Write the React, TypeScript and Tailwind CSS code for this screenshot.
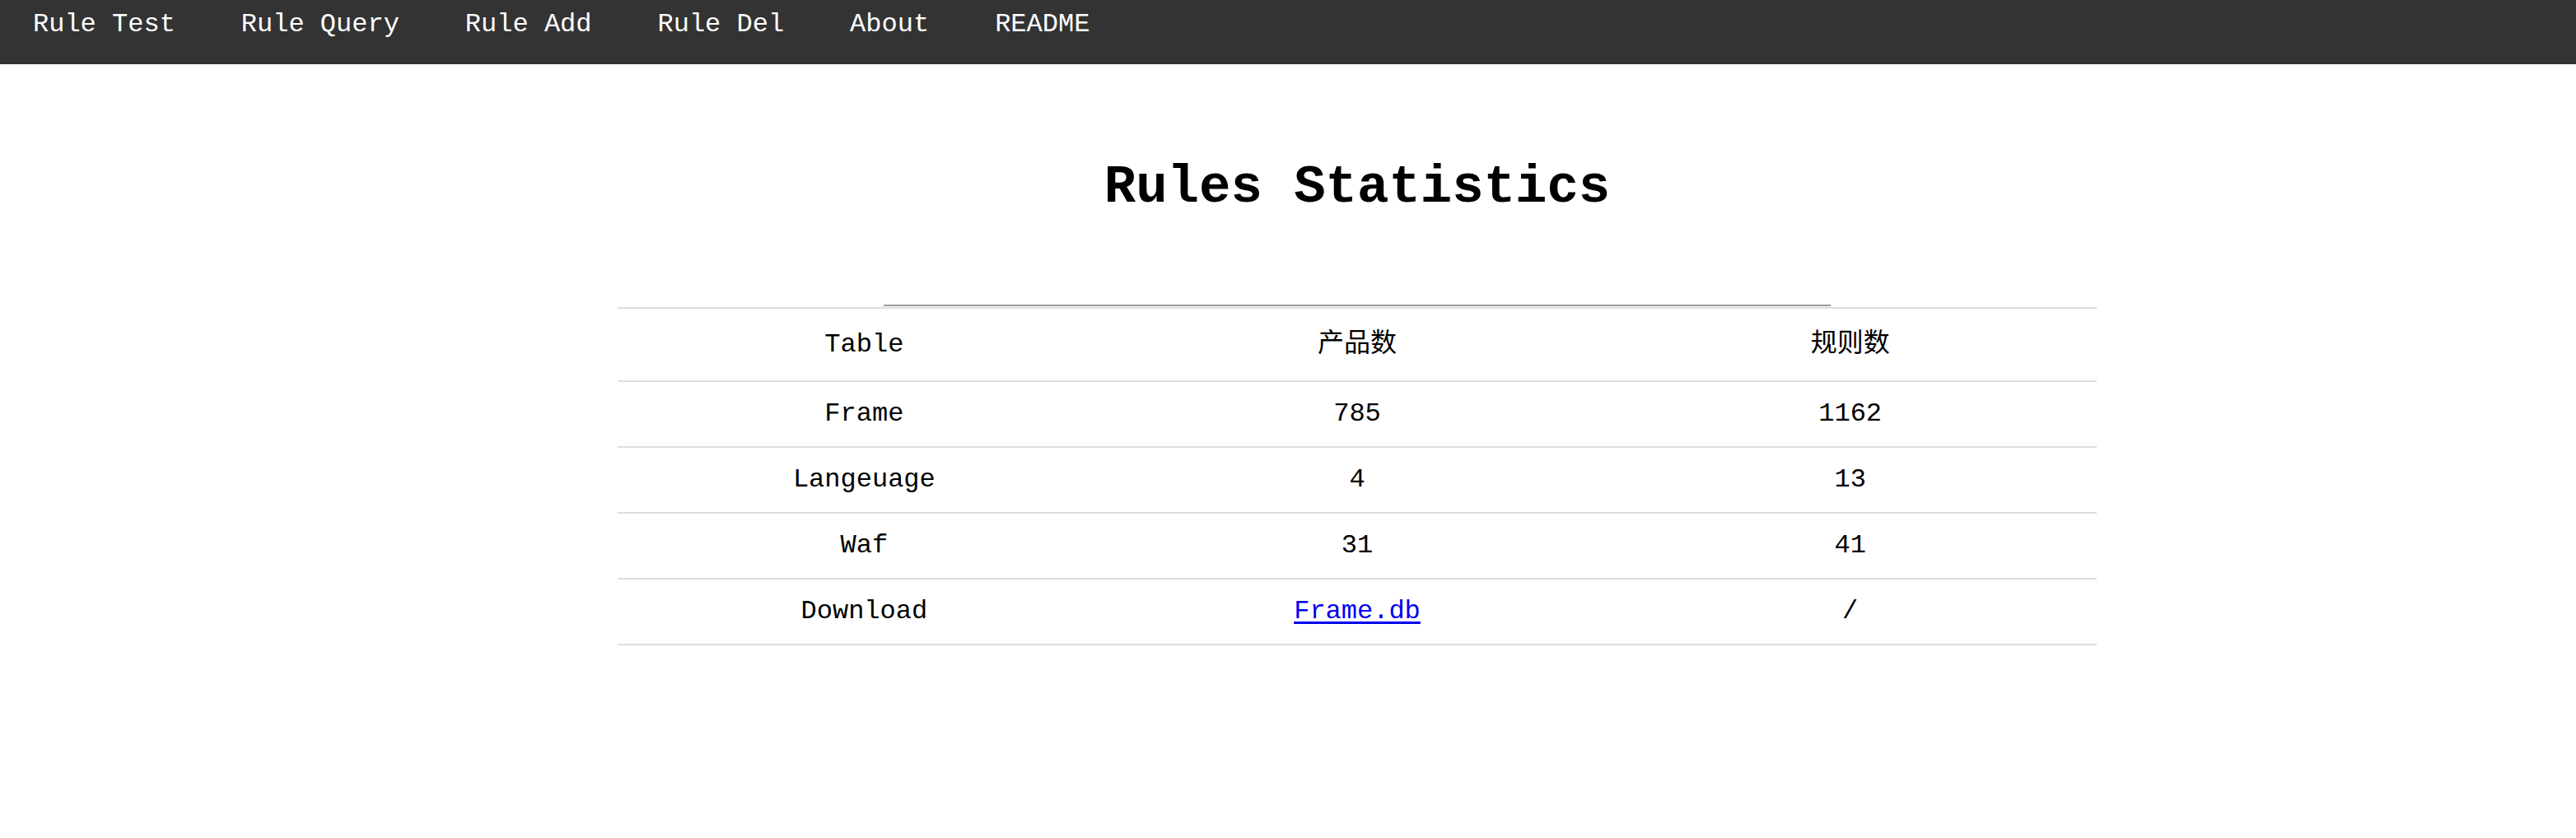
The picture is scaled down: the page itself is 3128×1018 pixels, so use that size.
import React from "react";

const navList = ["Rule Test", "Rule Query", "Rule Add", "Rule Del", "About", "README"];

const rows = [
  { name: "Frame", products: "785", rules: "1162" },
  { name: "Langeuage", products: "4", rules: "13" },
  { name: "Waf", products: "31", rules: "41" },
];

const mono = "font-['Liberation_Mono','Courier_New',monospace]";
const cjk = "font-['Liberation_Mono','Noto_Sans_CJK_SC',monospace]";

function NavBar() {
  return (
    <div className="flex h-[78px] w-full items-start bg-[#333333]">
      {navList.map((item) => (
        <a
          key={item}
          className={`${mono} cursor-pointer px-[40px] pt-[12px] text-[32px] leading-[36px] text-white`}
        >
          {item}
        </a>
      ))}
    </div>
  );
}

function Cell({ children }: { children: React.ReactNode }) {
  return (
    <td className="h-[80px] w-1/3 border-t-2 border-[#dddddd] p-0 text-center align-middle">
      {children}
    </td>
  );
}

export default function App() {
  return (
    <div className={`${mono} min-h-[1018px] w-full bg-white text-black`}>
      <NavBar />
      <div className="ml-[750px] w-[1796px]">
        <h1 className="pt-[110px] pb-[102px] text-center text-[64px] font-bold leading-[80px]">
          Rules Statistics
        </h1>
        <div className="mx-auto h-[2px] w-[64%] bg-[#9a9a9a]" />
        <table className="mt-px w-full border-collapse text-[32px] leading-[36px]">
          <tbody>
            <tr>
              <td className="h-[89px] w-1/3 border-t-2 border-[#dddddd] p-0 text-center align-middle">
                Table
              </td>
              <td className={`${cjk} h-[89px] w-1/3 border-t-2 border-[#dddddd] p-0 text-center align-middle`}>
                产品数
              </td>
              <td className={`${cjk} h-[89px] w-1/3 border-t-2 border-[#dddddd] p-0 text-center align-middle`}>
                规则数
              </td>
            </tr>
            {rows.map((r) => (
              <tr key={r.name}>
                <Cell>{r.name}</Cell>
                <Cell>{r.products}</Cell>
                <Cell>{r.rules}</Cell>
              </tr>
            ))}
            <tr className="border-b-2 border-[#dddddd]">
              <Cell>Download</Cell>
              <Cell>
                <a className="cursor-pointer text-[#0000ee] underline underline-offset-[4px]">Frame.db</a>
              </Cell>
              <Cell>/</Cell>
            </tr>
          </tbody>
        </table>
      </div>
    </div>
  );
}
